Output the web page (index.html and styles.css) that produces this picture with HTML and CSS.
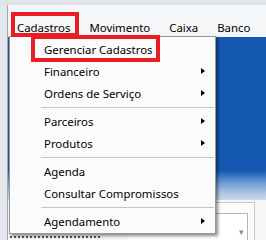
FILE: index.html
```html
<!DOCTYPE html>
<html>
<head>
<meta charset="utf-8">
<link rel="stylesheet" href="styles.css">
</head>
<body>
<div class="screen">
  <div class="topstrip"></div>
  <div class="window">
    <div class="titlegap"></div>
    <div class="menubar">
      <span class="mitem first">Cadastros</span>
      <span class="mitem">Movimento</span>
      <span class="mitem">Caixa</span>
      <span class="mitem">Banco</span>
    </div>
    <div class="content">
      <div class="mdi"></div>
      <div class="mdi-fade"></div>
      <div class="lower">
        <div class="faux-row"></div>
        <div class="combo-outer">
          <div class="combo-inner"><span class="combo-arrow">▾</span></div>
        </div>
      </div>
    </div>
  </div>

  <div class="dropdown">
    <div class="ditem">Gerenciar Cadastros</div>
    <div class="ditem sub">Financeiro</div>
    <div class="ditem sub">Ordens de Serviço</div>
    <div class="dsep"></div>
    <div class="ditem sub">Parceiros</div>
    <div class="ditem sub">Produtos</div>
    <div class="dsep"></div>
    <div class="ditem">Agenda</div>
    <div class="ditem">Consultar Compromissos</div>
    <div class="dsep"></div>
    <div class="ditem sub">Agendamento</div>
  </div>

  <div class="hl hl-menu"></div>
  <div class="hl hl-item"></div>
</div>
</body>
</html>
```
FILE: styles.css
```css
* { box-sizing: border-box; }
html, body { margin: 0; padding: 0; }
body {
  width: 266px;
  height: 240px;
  overflow: hidden;
  font-family: "Noto Sans", "Open Sans", sans-serif;
  font-size: 11.4px;
  color: #000;
}
.screen {
  position: relative;
  width: 266px;
  height: 240px;
  background: #e3e6ea;
  overflow: hidden;
}
.topstrip {
  height: 5px;
  background: #dfe3e8;
}
.window {
  margin-left: 7px;
  height: 235px;
  border-left: 1px solid #a4a8ae;
  background: #f5f6f7;
  display: flex;
  flex-direction: column;
}
.titlegap { height: 10px; background: #f5f6f7; }
.menubar {
  height: 22px;
  display: flex;
  align-items: flex-start;
  background: #f5f6f7;
}
.mitem {
  padding: 0 9px 0 10px;
  height: 22px;
  line-height: 26px;
  white-space: nowrap;
}
.mitem.first { padding-left: 9px; }
.content {
  flex: 1;
  display: flex;
  flex-direction: column;
}
.mdi {
  height: 135px;
  background: #1659b1;
}
.mdi-fade {
  height: 28px;
  background: linear-gradient(#1f62b6 0%, #6f9dd6 40%, #b3cae8 80%, #c9d9ee 100%);
}
.lower {
  flex: 1;
  background: #f7f7f7;
  position: relative;
  display: flex;
  flex-direction: column;
}
.faux-row {
  position: absolute;
  left: 2px;
  bottom: 1px;
  width: 90px;
  height: 3px;
  border-top: 2px dotted #555;
}
.combo-outer {
  margin: 2px 0 0 120px;
  width: 127px;
  flex: 1;
  border-top: 1px solid #c8c8c8;
  border-right: 1px solid #c8c8c8;
  padding: 10px 6px 0 0;
  background: #fcfcfc;
}
.combo-inner {
  height: 100%;
  border-top: 1px solid #b5b5b5;
  border-right: 1px solid #b5b5b5;
  background: #ffffff;
  display: flex;
  justify-content: flex-end;
  align-items: flex-end;
  padding: 0 3px 4px 0;
}
.combo-arrow {
  font-size: 9px;
  color: #8a8a8a;
  line-height: 9px;
}

.dropdown {
  position: absolute;
  left: 9px;
  top: 36px;
  width: 207px;
  height: 198px;
  background: #fbfbfb;
  border: 1px solid #979797;
  padding-top: 1px;
  box-shadow: 2px 2px 3px rgba(0, 0, 0, 0.45);
}
.ditem {
  position: relative;
  height: 22px;
  line-height: 24px;
  padding-left: 34px;
  white-space: nowrap;
}
.ditem.sub::after {
  content: "";
  position: absolute;
  left: 191px;
  top: 8px;
  border-top: 3.5px solid transparent;
  border-bottom: 3.5px solid transparent;
  border-left: 4px solid #000;
}
.dsep {
  height: 6px;
  margin-left: 31px;
  margin-right: 1px;
  display: flex;
  align-items: center;
}
.dsep::before {
  content: "";
  flex: 1;
  height: 1px;
  background: #c5c5c5;
}

.hl {
  position: absolute;
  border: 4px solid #ea1c24;
}
.hl-menu {
  left: 11px;
  top: 12px;
  width: 68px;
  height: 25px;
}
.hl-item {
  left: 31px;
  top: 35px;
  width: 129px;
  height: 27px;
}
```
